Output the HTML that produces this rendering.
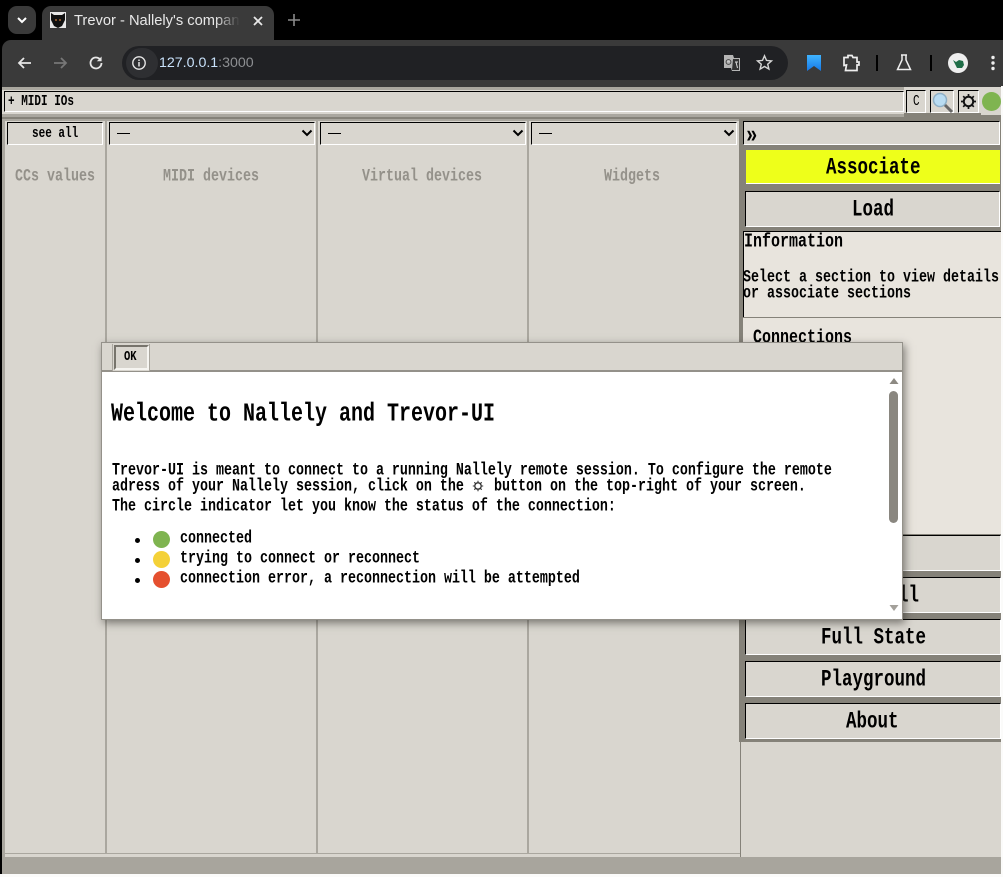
<!DOCTYPE html>
<html><head><meta charset="utf-8"><title>Trevor</title>
<style>
html,body{margin:0;padding:0;background:#000;overflow:hidden}
#r{position:relative;width:1003px;height:877px;overflow:hidden;background:#000}
.b{position:absolute;box-sizing:border-box}
.t{position:absolute;white-space:pre;font-family:"Liberation Mono",monospace;font-weight:bold;color:#000;transform-origin:0 0;line-height:1}
.s{font-size:13.33px;transform:translateY(2px) scaleY(1.3)}
.x{font-size:11px;transform:translateY(1px) scaleY(1.3)}
.l{font-size:17.5px;transform:translateY(2px) scaleY(1.3)}
.h{font-size:20px;transform:translateY(1.500px) scaleY(1.3)}
.g{color:#94918a}
.in{position:absolute;box-sizing:border-box;background:#d9d6cf;border-top:1px solid #000;border-left:1px solid #000;border-bottom:1px solid #fff;border-right:1px solid #fff}
.sv{position:absolute;overflow:visible}
.dot{position:absolute;width:17px;height:17px;border-radius:50%}
.bu{position:absolute;width:5px;height:5px;border-radius:50%;background:#000;left:135px}
</style></head><body><div id="r">

<!-- browser chrome -->
<div class="b" style="left:8px;top:6px;width:28px;height:28px;background:#3a3a3a;border-radius:9px"></div>
<svg class="sv" style="left:8px;top:6px" width="28" height="28"><path d="M10 12l4 4 4-4" fill="none" stroke="#fff" stroke-width="2"/></svg>
<div class="b" style="left:42px;top:6px;width:232px;height:36px;background:#3a3a3a;border-radius:9px 9px 0 0"></div>
<div class="b" style="left:50px;top:12px;width:16px;height:16px;background:#e8e8e8"></div>
<svg class="sv" style="left:50px;top:12px" width="16" height="16"><path d="M1 1l3 2h8l3-2v7l-3 6-4 2-4-2-3-6z" fill="#111"/><circle cx="6" cy="8" r="1" fill="#a63"/><circle cx="10" cy="8" r="1" fill="#a63"/></svg>
<div style="position:absolute;left:74px;top:11px;width:166px;height:20px;overflow:hidden;font:14.7px/20px 'Liberation Sans',sans-serif;color:#e8e8e8;white-space:pre;-webkit-mask-image:linear-gradient(90deg,#000 85%,transparent 100%);mask-image:linear-gradient(90deg,#000 85%,transparent 100%)">Trevor - Nallely's compan</div>
<svg class="sv" style="left:251px;top:14px" width="14" height="14"><path d="M3 3l8 8M11 3l-8 8" stroke="#e8e8e8" stroke-width="1.8"/></svg>
<svg class="sv" style="left:287px;top:13px" width="14" height="14"><path d="M7 1v12M1 7h12" stroke="#8a8a8a" stroke-width="1.6"/></svg>
<div class="b" style="left:2px;top:40px;width:1001px;height:47px;background:#3a3a3a;border-radius:9px 0 0 0"></div>
<svg class="sv" style="left:16px;top:54px" width="18" height="18"><path d="M15 9H3M8 4L3 9l5 5" fill="none" stroke="#e6e6e6" stroke-width="1.8"/></svg>
<svg class="sv" style="left:51px;top:54px" width="18" height="18"><path d="M3 9h12M10 4l5 5-5 5" fill="none" stroke="#777" stroke-width="1.8"/></svg>
<svg class="sv" style="left:87px;top:54px" width="18" height="18"><path d="M14.5 9A5.5 5.5 0 1 1 12.8 5" fill="none" stroke="#e6e6e6" stroke-width="1.8"/><path d="M14.6 2.5v4.8H9.8z" fill="#e6e6e6"/></svg>
<div class="b" style="left:122px;top:46px;width:666px;height:34px;background:#202124;border-radius:17px"></div>
<div class="b" style="left:126px;top:48px;width:32px;height:30px;background:#2e2f32;border-radius:15px"></div>
<svg class="sv" style="left:131px;top:55px" width="16" height="16"><circle cx="8" cy="8" r="6.2" fill="none" stroke="#e6e6e6" stroke-width="1.4"/><path d="M8 7v4.500M8 4.500v1.500" stroke="#e6e6e6" stroke-width="1.5"/></svg>
<div style="position:absolute;left:159px;top:53px;font:14.2px/20px 'Liberation Sans',sans-serif;color:#c9e2fb;white-space:pre">127.0.0.1<span style="color:#8d8f92">:3000</span></div>
<svg class="sv" style="left:723px;top:54px" width="18" height="18"><path d="M1 1h9l1 3h6v13H9l-1-3H1z" fill="#b5b5b5"/><path d="M10 5h6v11H9z" fill="#333"/><path d="M4 7h4M12 8h3M13 8l1.500 6" stroke="#ddd" stroke-width="1" fill="none"/><circle cx="5.500" cy="8" r="2.400" fill="none" stroke="#444"/></svg>
<svg class="sv" style="left:756px;top:54px" width="17" height="17"><path d="M8.500 1.800l2 4.600 5 .5-3.800 3.300 1.200 4.900-4.400-2.600-4.400 2.600 1.200-4.900L1.500 6.900l5-.5z" fill="none" stroke="#d5d5d5" stroke-width="1.400"/></svg>
<svg class="sv" style="left:806px;top:55px" width="16" height="17"><defs><linearGradient id="bk" x1="0" y1="0" x2="0" y2="1"><stop offset="0" stop-color="#3fb4ff"/><stop offset="1" stop-color="#1678e6"/></linearGradient></defs><path d="M1 0h14v16l-7-5-7 5z" fill="url(#bk)"/></svg>
<svg class="sv" style="left:842px;top:54px" width="18" height="18"><path d="M2 3.500h4V1.500h4l1 2h4v4.500h2v3h-2v5.500H3.500L4.500 11 2 11.500z" fill="none" stroke="#eee" stroke-width="1.700"/></svg>
<div class="b" style="left:876px;top:55px;width:2px;height:16px;background:#000"></div>
<svg class="sv" style="left:896px;top:54px" width="16" height="17"><path d="M5 1h6M6 1v5L1.500 15.500h13L10 6V1" fill="none" stroke="#eee" stroke-width="1.500"/></svg>
<div class="b" style="left:930px;top:55px;width:2px;height:16px;background:#000"></div>
<div class="b" style="left:948px;top:53px;width:20px;height:20px;border-radius:50%;background:#eee"></div>
<svg class="sv" style="left:948px;top:53px" width="20" height="20"><path d="M5 7l3 2 3-2 4 1 1 4-2 3H9L7 11z" fill="#1f6d47"/></svg>
<svg class="sv" style="left:990px;top:55px" width="6" height="16"><circle cx="3" cy="2.500" r="1.700" fill="#eee"/><circle cx="3" cy="8" r="1.700" fill="#eee"/><circle cx="3" cy="13.500" r="1.700" fill="#eee"/></svg>

<!-- page -->
<div class="b" style="left:2px;top:87px;width:1001px;height:787px;background:#d9d6cf"></div>
<div class="b" style="left:0;top:874px;width:1003px;height:3px;background:#fbfbfa"></div>
<div class="b" style="left:0;top:40px;width:2px;height:834px;background:#000"></div>
<div class="b" style="left:2px;top:87px;width:902px;height:28px;background:#d9d6cf;border-top:3px solid #aaa79f"></div>
<div class="in" style="left:4px;top:91px;width:900px;height:21px"></div>
<div class="t x" style="left:8px;top:95px">+ MIDI IOs</div>
<div class="b" style="left:2px;top:114px;width:902px;height:3px;background:#aaa79f"></div>
<div class="b" style="left:904px;top:87px;width:99px;height:26px;background:#d9d6cf"></div>
<div class="b" style="left:904px;top:113px;width:99px;height:8px;background:#858279"></div>
<div class="b" style="left:981px;top:87px;width:22px;height:28px;background:#d9d6cf"></div>
<div class="in" style="left:906px;top:90px;width:20px;height:23px"></div>
<div class="t x" style="left:913px;top:95px;font-weight:normal">C</div>
<div class="in" style="left:930px;top:90px;width:24px;height:23px"></div>
<svg class="sv" style="left:931px;top:90px" width="24" height="23"><circle cx="9" cy="10" r="6.500" fill="#b9dcf2" stroke="#8fb0c6" stroke-width="1.500"/><path d="M14 15l7 7" stroke="#666" stroke-width="3"/></svg>
<div class="in" style="left:958px;top:90px;width:21px;height:23px"></div>
<svg class="sv" style="left:960px;top:93px" width="17" height="17"><circle cx="8.500" cy="8.500" r="4.700" fill="none" stroke="#111" stroke-width="2"/><path d="M8.500 1v3M8.500 13v3M1 8.500h3M13 8.500h3M3.200 3.200l2.100 2.100M11.700 11.700l2.100 2.100M13.800 3.200l-2.100 2.100M5.300 11.700l-2.100 2.100" stroke="#111" stroke-width="1.700"/></svg>
<div class="dot" style="left:982px;top:92px;width:19px;height:19px;background:#7fb450"></div>

<div class="b" style="left:2px;top:117px;width:902px;height:2px;background:#858279"></div>
<div class="b" style="left:2px;top:119px;width:3px;height:738px;background:#aaa79f"></div>
<div class="b" style="left:5px;top:119px;width:734px;height:2px;background:#aaa79f"></div>

<div class="in" style="left:7px;top:122px;width:96px;height:23px"></div>
<div class="t x" style="left:32px;top:127px">see all</div>
<div class="in" style="left:109px;top:122px;width:206px;height:23px"></div>
<div class="in" style="left:320px;top:122px;width:206px;height:23px"></div>
<div class="in" style="left:531px;top:122px;width:206px;height:23px"></div>
<div class="b" style="left:117px;top:133px;width:13px;height:1px;background:#000"></div>
<div class="b" style="left:328px;top:133px;width:13px;height:1px;background:#000"></div>
<div class="b" style="left:539px;top:133px;width:13px;height:1px;background:#000"></div>
<svg class="sv" style="left:301px;top:129px" width="12" height="9"><path d="M1.500 1.500L6 6l4.500-4.500" fill="none" stroke="#000" stroke-width="2"/></svg>
<svg class="sv" style="left:512px;top:129px" width="12" height="9"><path d="M1.500 1.500L6 6l4.500-4.500" fill="none" stroke="#000" stroke-width="2"/></svg>
<svg class="sv" style="left:723px;top:129px" width="12" height="9"><path d="M1.500 1.500L6 6l4.500-4.500" fill="none" stroke="#000" stroke-width="2"/></svg>

<!-- column dividers -->
<div class="b" style="left:105px;top:119px;width:2px;height:734px;background:#aaa79f"></div>
<div class="b" style="left:316px;top:119px;width:2px;height:734px;background:#aaa79f"></div>
<div class="b" style="left:527px;top:119px;width:2px;height:734px;background:#aaa79f"></div>
<div class="b" style="left:5px;top:853px;width:735px;height:1px;background:#aaa79f"></div>
<div class="t s g" style="left:15px;top:167px">CCs values</div>
<div class="t s g" style="left:163px;top:167px">MIDI devices</div>
<div class="t s g" style="left:362px;top:167px">Virtual devices</div>
<div class="t s g" style="left:604px;top:167px">Widgets</div>

<!-- right panel -->
<div class="b" style="left:739px;top:119px;width:264px;height:623px;background:#858279"></div>
<div class="b" style="left:740px;top:742px;width:1px;height:118px;background:#858279"></div>
<div class="in" style="left:743px;top:121px;width:257px;height:24px"></div>
<div class="t l" style="left:746px;top:122px;font-size:19px">»</div>
<div class="b" style="left:746px;top:150px;width:254px;height:34px;background:#eeff1a;border-bottom:1px solid #fff"></div>
<div class="t l" style="left:826px;top:156px">Associate</div>
<div class="in" style="left:745px;top:191px;width:255px;height:36px"></div>
<div class="t l" style="left:852px;top:198px">Load</div>
<div class="b" style="left:743px;top:231px;width:260px;height:86px;background:#e8e4dd;border-left:1px solid #000;border-top:1px solid #000"></div>
<div class="t" style="left:744px;top:232px;font-size:15px;transform:scaleY(1.3)">Information</div>
<div class="t s" style="left:743px;top:268px">Select a section to view details</div>
<div class="t s" style="left:743px;top:284px">or associate sections</div>
<div class="b" style="left:743px;top:318px;width:260px;height:216px;background:#e8e4dd"></div>
<div class="t" style="left:753px;top:328px;font-size:15px;font-weight:bold;transform:scaleY(1.3)">Connections</div>
<div class="in" style="left:745px;top:535px;width:256px;height:36px"></div>
<div class="in" style="left:745px;top:577px;width:256px;height:36px"></div>
<div class="t l" style="left:898px;top:584px">ll</div>
<div class="in" style="left:745px;top:619px;width:256px;height:36px"></div>
<div class="t l" style="left:821px;top:626px">Full State</div>
<div class="in" style="left:745px;top:661px;width:256px;height:36px"></div>
<div class="t l" style="left:821px;top:668px">Playground</div>
<div class="in" style="left:745px;top:703px;width:256px;height:36px"></div>
<div class="t l" style="left:846px;top:710px">About</div>

<!-- bottom strip -->
<div class="b" style="left:2px;top:857px;width:1001px;height:17px;background:#a8a59d"></div>

<!-- right edge -->
<div class="b" style="left:1001px;top:86px;width:2px;height:791px;background:#fbfbfa"></div>

<!-- modal -->
<div class="b" style="left:101px;top:342px;width:802px;height:278px;background:#fff;border:1px solid #94918a;box-shadow:2px 3px 8px rgba(40,38,34,.55)"></div>
<div class="b" style="left:102px;top:343px;width:800px;height:29px;background:#d9d6cf;border-bottom:2px solid #94918a"></div>
<div class="b" style="left:112px;top:344px;width:38px;height:27px;background:#d9d6cf;border-right:1px solid #aaa79f;border-left:1px solid #aaa79f"></div>
<div class="b" style="left:114px;top:345px;width:35px;height:25px;background:#d9d6cf;border:2px solid;border-color:#77746c #f6f5f1 #f6f5f1 #77746c"></div>
<div class="t x" style="left:124px;top:350px;font-size:10.500px">OK</div>
<div class="t h" style="left:111px;top:401px">Welcome to Nallely and Trevor-UI</div>
<div class="t s" style="left:112px;top:461px">Trevor-UI is meant to connect to a running Nallely remote session. To configure the remote</div>
<div class="t s" style="left:112px;top:477px">adress of your Nallely session, click on the</div>
<svg class="sv" style="left:472px;top:480px" width="12" height="12"><circle cx="6" cy="6" r="3.200" fill="none" stroke="#333" stroke-width="1.300"/><path d="M6 .8v2M6 9.200v2M.8 6h2M9.200 6h2M2.300 2.300l1.400 1.400M8.300 8.300l1.400 1.400M9.700 2.300L8.300 3.700M3.700 8.300L2.300 9.700" stroke="#333" stroke-width="1.100"/></svg>
<div class="t s" style="left:494px;top:477px">button on the top-right of your screen.</div>
<div class="t s" style="left:112px;top:497px">The circle indicator let you know the status of the connection:</div>
<div class="bu" style="top:538px"></div>
<div class="bu" style="top:558px"></div>
<div class="bu" style="top:578px"></div>
<div class="dot" style="left:153px;top:531px;background:#7fb450"></div>
<div class="dot" style="left:153px;top:551px;background:#f4d138"></div>
<div class="dot" style="left:153px;top:571px;background:#e5502f"></div>
<div class="t s" style="left:180px;top:529px">connected</div>
<div class="t s" style="left:180px;top:549px">trying to connect or reconnect</div>
<div class="t s" style="left:180px;top:569px">connection error, a reconnection will be attempted</div>
<!-- scrollbar -->
<svg class="sv" style="left:889px;top:377px" width="10" height="8"><path d="M5 1l4.500 6h-9z" fill="#8d8a83"/></svg>
<div class="b" style="left:889px;top:391px;width:9px;height:132px;background:#8a8780;border-radius:4.500px"></div>
<svg class="sv" style="left:889px;top:604px" width="10" height="8"><path d="M.5 1h9L5 7z" fill="#a3a09a"/></svg>

</div></body></html>
